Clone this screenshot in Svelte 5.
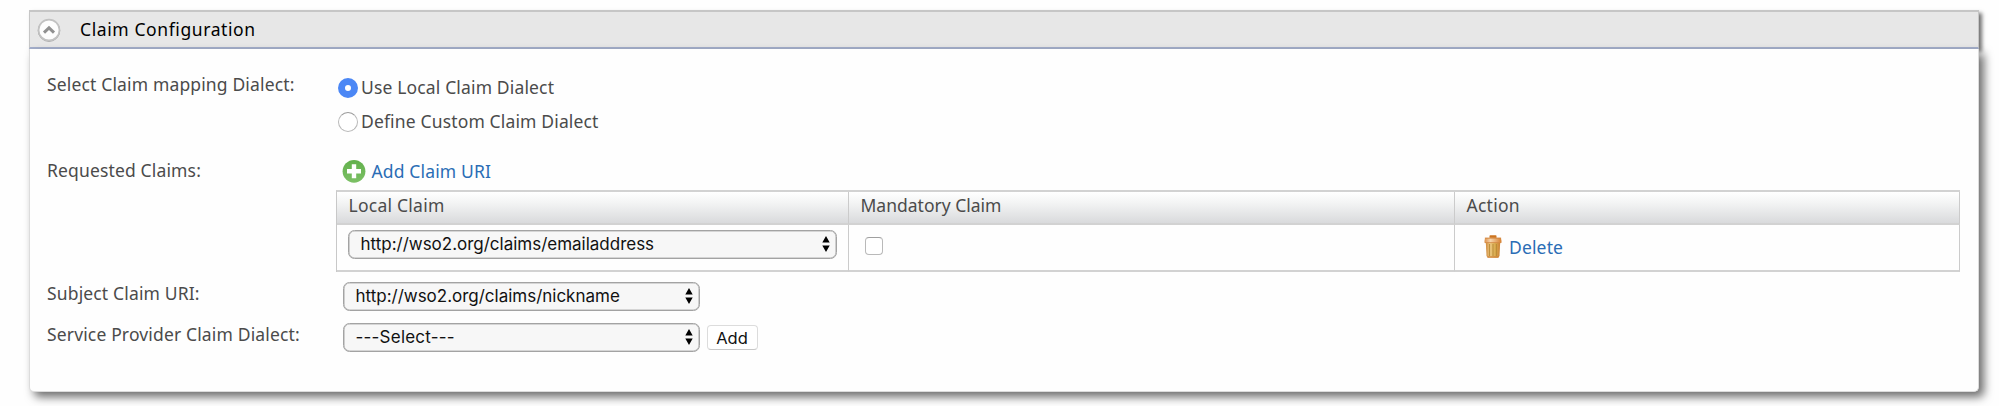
{#snippet arrows()}
  <svg class="arrows" width="8" height="16" viewBox="0 0 8 16"><path d="M4 0 7.7 6.6H.3ZM4 16 .3 9.4H7.7Z" /></svg>
{/snippet}

<main>
<section class="panel">
  <header>
    <svg width="24" height="24" viewBox="0 0 24 24">
      <circle cx="12" cy="12.6" r="10.8" fill="none" stroke="#a5a5a5" stroke-width="1" />
      <circle cx="12" cy="12" r="10.4" fill="#fdfdfd" stroke="#c2c2c2" stroke-width="1.6" />
      <path d="M7 14.6 12 9.8 17 14.6" fill="none" stroke="#909090" stroke-width="3" />
    </svg>
    <h1>Claim Configuration</h1>
  </header>
  <div class="body">
    <div class="row dialect">
      <div class="label">Select Claim mapping Dialect:</div>
      <div class="options">
        <label><i class="radio on"></i>Use Local Claim Dialect</label>
        <label><i class="radio"></i>Define Custom Claim Dialect</label>
      </div>
    </div>
    <div class="row requested">
      <div class="label">Requested Claims:</div>
      <div class="claims">
        <a class="add" href="#add">
          <svg width="24" height="24" viewBox="0 0 24 24">
            <defs>
              <linearGradient id="green" x1="0" y1="0" x2="0" y2="1">
                <stop offset="0" stop-color="#62b04c" />
                <stop offset="1" stop-color="#7cc065" />
              </linearGradient>
            </defs>
            <circle cx="12" cy="12.3" r="11.4" fill="url(#green)" />
            <path d="M12 5.3v14M5 12.3h14" stroke="#fff" stroke-width="4.4" />
          </svg>
          <span>Add Claim URI</span>
        </a>
        <div class="table">
          <div class="th local">Local Claim</div>
          <div class="th mandatory">Mandatory Claim</div>
          <div class="th action">Action</div>
          <div class="td"><div class="select wide"><span>http://wso2.org/claims/emailaddress</span>{@render arrows()}</div></div>
          <div class="td"><i class="check"></i></div>
          <div class="td">
            <a class="delete" href="#delete">
              <svg width="18" height="23" viewBox="0 0 18 23">
                <defs>
                  <linearGradient id="can">
                    <stop offset="0" stop-color="#d08a3c" />
                    <stop offset=".3" stop-color="#ecc983" />
                    <stop offset=".65" stop-color="#d9ab4e" />
                    <stop offset="1" stop-color="#cc8236" />
                  </linearGradient>
                  <linearGradient id="lid">
                    <stop offset="0" stop-color="#dc8f48" />
                    <stop offset=".35" stop-color="#f6d5ad" />
                    <stop offset="1" stop-color="#d67f2e" />
                  </linearGradient>
                </defs>
                <path d="M5.5 3V1q0-.8.8-.8h5.4q.8 0 .8.8v2z" fill="#cc7420" />
                <path d="M1.8 7.5h14.4l-.7 13.2q-.2 2-2.2 2H4.7q-2 0-2.2-2Z" fill="url(#can)" />
                <path d="M5.6 9v12M9 9v12M12.4 9v12" stroke="#b98a35" stroke-width="1" />
                <path d="M3.5 22h11" stroke="#cf8038" stroke-width="1.3" />
                <path d="M1.3 2.8h15.4q.9 2 .9 5H.4q0-3 .9-5Z" fill="url(#lid)" />
                <path d="M.8 3.2h16.4M1 7.6h16" stroke="#cf8138" stroke-width=".8" />
              </svg>
              <span>Delete</span>
            </a>
          </div>
        </div>
      </div>
    </div>
    <div class="row subject">
      <div class="label">Subject Claim URI:</div>
      <div class="select"><span>http://wso2.org/claims/nickname</span>{@render arrows()}</div>
    </div>
    <div class="row provider">
      <div class="label">Service Provider Claim Dialect:</div>
      <div class="select"><span class="placeholder">---Select---</span>{@render arrows()}</div>
      <button>Add</button>
    </div>
  </div>
</section>
</main>

<style>
  :global(body) { background: #fefefe; }
  * { box-sizing: border-box; }
  svg { flex: none; display: block; }
  main { width: 1999px; height: 406px; padding: 10px 0 0 29px; overflow: hidden; background: #fefefe; }
  .panel { width: 1950px; height: 382px; font: 17.5px/24px "Noto Sans", sans-serif; letter-spacing: .15px; color: #4b4b4b; }
  header { display: flex; align-items: center; height: 39px; border: 1px solid #c6c6c6; border-width: 2px 1px; border-bottom-color: #a3aecb; background: #e7e7e7; padding-left: 6.5px; gap: 19.5px; box-shadow: 3px 3px 4px #707070; }
  h1 { font: inherit; letter-spacing: .6px; color: #000; margin: -2px 0 0; }
  .body { position: relative; height: 343px; background: #fefefe; border: 1px solid #dcdcdc; border-top: 0; border-radius: 0 0 5px 5px; padding: 23px 0 0 17px; box-shadow: 5px 5px 10px #6c6c6c; }
  .row { display: flex; align-items: flex-start; }
  .label { width: 290px; flex: none; }
  .dialect { height: 86px; }
  .requested { height: 123px; }
  .subject { height: 41px; }
  .options { margin: -2px 0 0 1px; }
  .options label { display: flex; align-items: center; gap: 3px; height: 34px; }
  .radio { width: 20px; height: 20px; margin-top: 2px; border-radius: 50%; border: 1px solid #b9b9b9; border-top-color: #9a9a9a; background: #fff; }
  .radio.on { border: 7px solid #4b87f5; }
  a { color: #2a6db5; text-decoration: none; }
  .claims { margin-left: -1px; }
  .add { display: flex; gap: 5.5px; height: 32px; padding: 1px 0 0 6px; }
  .table { display: grid; grid-template-columns: 512px 606px 505px; grid-template-rows: 33px 47px; border-top: 2px solid #d2d2d2; border-left: 1px solid #c8c8c8; }
  .th, .td { border-right: 1px solid #cbcbcb; border-bottom: 2px solid #d2d2d2; }
  .th { background: linear-gradient(#fff, #f3f4f4 35%, #d9dadc); padding: 1px 0 0 11.5px; }
  .local { letter-spacing: .25px; }
  .mandatory { letter-spacing: 0; }
  .action { letter-spacing: .25px; }
  .td { padding: 5px 0 0 11px; }
  .select { display: flex; align-items: center; justify-content: space-between; width: 357px; height: 29px; margin: 1px 0 0 6px; border: 1px solid #a3a3a3; box-shadow: inset 0 0 0 .6px #b4b4b4; border-radius: 6.5px; background: #f7f7f7; padding: 0 6.5px 1px 11.5px; font: 17px Inter, sans-serif; letter-spacing: -.01px; color: #111; }
  .wide { width: 489px; margin: 0; }
  .placeholder { letter-spacing: .22px; }
  .check { display: block; width: 18px; height: 18px; margin: 7px 0 0 4.5px; border: 1px solid #b9b9b9; border-top-color: #9f9f9f; border-radius: 4px; background: #fff; }
  .delete { display: flex; gap: 7.5px; padding: 5px 0 0 17.5px; }
  .delete svg { margin-top: -.5px; }
  button { width: 51px; height: 25px; margin: 3px 0 0 6.5px; padding: 0; border: 1px solid #dcdcdc; border-bottom-color: #c8c8c8; border-radius: 4px; background: #fff; font: 16.5px Inter, sans-serif; color: #111; }
</style>
